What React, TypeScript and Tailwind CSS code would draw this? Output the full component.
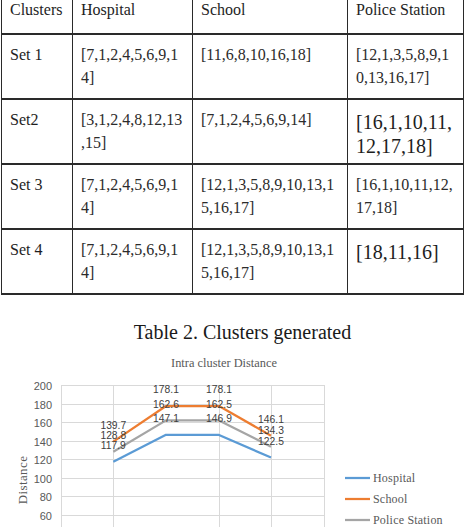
import React from "react";

type Cell = { t: string[]; big?: boolean };
const rows: { name: string; cells: Cell[] }[] = [
  {
    name: "Set 1",
    cells: [
      { t: ["[7,1,2,4,5,6,9,1", "4]"] },
      { t: ["[11,6,8,10,16,18]"] },
      { t: ["[12,1,3,5,8,9,1", "0,13,16,17]"] },
    ],
  },
  {
    name: "Set2",
    cells: [
      { t: ["[3,1,2,4,8,12,13", ",15]"] },
      { t: ["[7,1,2,4,5,6,9,14]"] },
      { t: ["[16,1,10,11,", "12,17,18]"], big: true },
    ],
  },
  {
    name: "Set 3",
    cells: [
      { t: ["[7,1,2,4,5,6,9,1", "4]"] },
      { t: ["[12,1,3,5,8,9,10,13,1", "5,16,17]"] },
      { t: ["[16,1,10,11,12,", "17,18]"] },
    ],
  },
  {
    name: "Set 4",
    cells: [
      { t: ["[7,1,2,4,5,6,9,1", "4]"] },
      { t: ["[12,1,3,5,8,9,10,13,1", "5,16,17]"] },
      { t: ["[18,11,16]"], big: true },
    ],
  },
];

const xs = [113.3, 166, 219, 271];
const yOf = (v: number) => 385.7 + (200 - v) * 0.9275;
const series = [
  { name: "Hospital", color: "#5B9BD5", vals: [117.9, 147.1, 146.9, 122.5] },
  { name: "School", color: "#ED7D31", vals: [139.7, 178.1, 178.1, 146.1] },
  { name: "Police Station", color: "#A5A5A5", vals: [128.8, 162.6, 162.5, 134.3] },
];
const labelOrder = [1, 2, 0];

function Chart() {
  const gridY = [385.5, 404.5, 422.5, 441.5, 459.5, 478.5, 496.5, 515.5];
  const yVals = [200, 180, 160, 140, 120, 100, 80, 60];
  const gridX = [61.5, 113.5, 219.5, 271.5, 324.5];
  return (
    <svg width="465" height="185" viewBox="0 342 465 185" className="block">
      <text
        x="224"
        y="367"
        textAnchor="middle"
        fontFamily="Liberation Serif, serif"
        fontSize="12.4"
        fill="#595959"
      >
        Intra cluster Distance
      </text>
      {gridY.map((y, i) => (
        <g key={i}>
          <line x1="61" x2="325" y1={y} y2={y} stroke="#d9d9d9" strokeWidth="1" />
          <text
            x="52"
            y={y + 4}
            textAnchor="end"
            fontFamily="Liberation Sans, sans-serif"
            fontSize="11"
            fill="#595959"
          >
            {yVals[i]}
          </text>
        </g>
      ))}
      {gridX.map((x, i) => (
        <line key={i} x1={x} x2={x} y1="385" y2="530" stroke="#d9d9d9" strokeWidth="1" />
      ))}
      <text
        transform="translate(27 480) rotate(-90)"
        textAnchor="middle"
        fontFamily="Liberation Serif, serif"
        fontSize="13"
        letterSpacing="0.4"
        fill="#595959"
      >
        Distance
      </text>
      {series.map((s) => (
        <polyline
          key={s.name}
          points={s.vals.map((v, i) => `${xs[i]},${yOf(v)}`).join(" ")}
          fill="none"
          stroke={s.color}
          strokeWidth="2.25"
          strokeLinejoin="round"
        />
      ))}
      {labelOrder.map((si) =>
        series[si].vals.map((v, i) => (
          <text
            key={`${si}-${i}`}
            x={xs[i]}
            y={yOf(v) - 12.8}
            textAnchor="middle"
            fontFamily="Liberation Sans, sans-serif"
            fontSize="10.3"
            fill="#404040"
          >
            {v.toFixed(1)}
          </text>
        ))
      )}
      {series.map((s, i) => {
        const y = 478 + i * 21;
        return (
          <g key={s.name}>
            <line x1="345" x2="370" y1={y} y2={y} stroke={s.color} strokeWidth="2.25" />
            <text
              x="373"
              y={y + 4}
              fontFamily="Liberation Serif, serif"
              fontSize="12"
              letterSpacing="0.2"
              fill="#595959"
            >
              {s.name}
            </text>
          </g>
        );
      })}
    </svg>
  );
}

export default function App() {
  return (
    <div className="w-[465px] h-[527px] overflow-hidden bg-white font-[family-name:Liberation_Serif,serif] text-[#1e1e1e]">
      <div className="ml-px grid grid-cols-[71px_120px_155px_116px] border-l border-[#2a2a2a]">
        {["Clusters", "Hospital", "School", "Police Station"].map((h) => (
          <div
            key={h}
            className="h-[35px] border-r border-b-2 border-[#2a2a2a] pl-[8px] text-[16px] leading-[23px]"
          >
            <div className="-mt-[2px]">{h}</div>
          </div>
        ))}
        {rows.map((r) => (
          <React.Fragment key={r.name}>
            <div className="h-[65px] border-r border-b-2 border-[#2a2a2a] pl-[8px] pt-[8px] text-[16px] leading-[23px]">
              {r.name}
            </div>
            {r.cells.map((c, i) => (
              <div
                key={i}
                className={
                  c.big
                    ? "h-[65px] border-r border-b-2 border-[#2a2a2a] pl-[8px] pt-[10px] text-[20px] leading-[24px] text-[#1e1e1e]"
                    : "h-[65px] border-r border-b-2 border-[#2a2a2a] pl-[8px] pt-[8px] text-[16px] leading-[23px] text-[#2b2b2b]"
                }
              >
                {c.t.map((line, j) => (
                  <div key={j} className="whitespace-nowrap">
                    {line}
                  </div>
                ))}
              </div>
            ))}
          </React.Fragment>
        ))}
      </div>
      <div className="mt-[27px] h-[20px] pl-[20px] text-center text-[20px] leading-[20px] text-[#1a1a1a]">
        Table 2. Clusters generated
      </div>
      <Chart />
    </div>
  );
}
